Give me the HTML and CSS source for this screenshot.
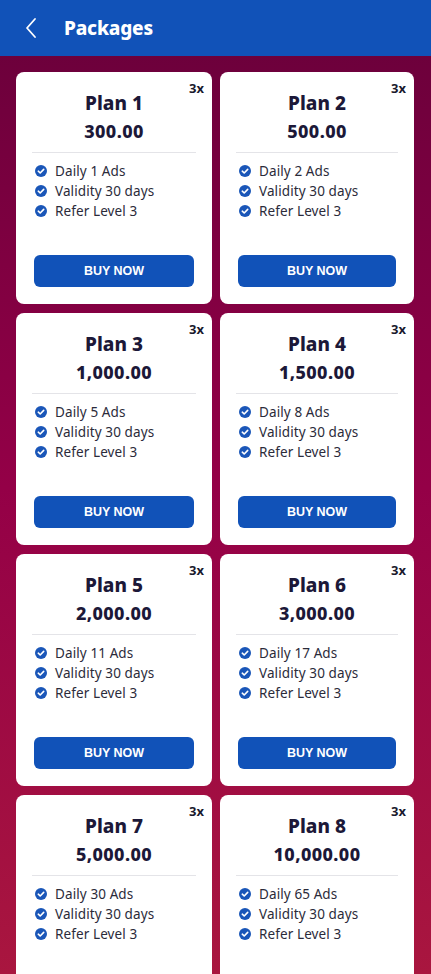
FILE: index.html
```html
<!DOCTYPE html>
<html lang="en">
<head>
    <meta charset="UTF-8">
    <meta name="viewport" content="width=device-width, initial-scale=1.0">
    <title>Packages</title>
    <link rel="stylesheet" href="styles.css">
</head>
<body>
    <header class="topbar">
        <svg class="back" width="14" height="22" viewBox="0 0 14 22"><path d="M11 2 L3 11 L11 20" fill="none" stroke="#fff" stroke-width="1.8" stroke-linecap="round" stroke-linejoin="round"/></svg>
        <h1>Packages</h1>
    </header>

    <main class="plans" id="plans"></main>

    <script>
        const plans = [
            { name: "Plan 1", price: "300.00", ads: 1 },
            { name: "Plan 2", price: "500.00", ads: 2 },
            { name: "Plan 3", price: "1,000.00", ads: 5 },
            { name: "Plan 4", price: "1,500.00", ads: 8 },
            { name: "Plan 5", price: "2,000.00", ads: 11 },
            { name: "Plan 6", price: "3,000.00", ads: 17 },
            { name: "Plan 7", price: "5,000.00", ads: 30 },
            { name: "Plan 8", price: "10,000.00", ads: 65 }
        ];

        const check = '<svg class="tick" width="12" height="12" viewBox="0 0 12 12"><circle cx="6" cy="6" r="6" fill="#1a56b8"/><path d="M3.3 6.2 L5.2 8 L8.7 4.4" fill="none" stroke="#fff" stroke-width="1.6" stroke-linecap="round" stroke-linejoin="round"/></svg>';

        const list = document.getElementById("plans");
        plans.forEach(function(p) {
            const card = document.createElement("div");
            card.className = "card";
            card.innerHTML =
                '<span class="mult">3x</span>' +
                '<h2>' + p.name + '</h2>' +
                '<div class="price">' + p.price + '</div>' +
                '<ul class="features">' +
                    '<li>' + check + 'Daily ' + p.ads + ' Ads</li>' +
                    '<li>' + check + 'Validity 30 days</li>' +
                    '<li>' + check + 'Refer Level 3</li>' +
                '</ul>' +
                '<button type="button">BUY NOW</button>';
            list.appendChild(card);
        });
    </script>
</body>
</html>
```

FILE: styles.css
```css
/* Packages page */
html, body {
    margin: 0;
    padding: 0;
}

body {
    font-family: "Noto Sans", "Open Sans", sans-serif;
    background: linear-gradient(to bottom, #68003a 0%, #940047 50%, #a9163f 100%);
    height: 974px;
    overflow: hidden;
}

.topbar {
    height: 56px;
    background-color: #1152b8;
    display: flex;
    align-items: center;
    padding-left: 24px;
}

.back {
    display: block;
}

.topbar h1 {
    margin: 0 0 0 26px;
    color: #fff;
    font-size: 19px;
    font-weight: 800;
    letter-spacing: -0.2px;
}

.plans {
    display: grid;
    grid-template-columns: 196px 194px;
    column-gap: 8px;
    row-gap: 9px;
    padding: 16px 17px 16px 16px;
}

.card {
    position: relative;
    background-color: #fff;
    border-radius: 8px;
    padding: 19px 16px 17px;
    height: 232px;
    box-sizing: border-box;
    display: flex;
    flex-direction: column;
}

.mult {
    position: absolute;
    top: 7px;
    right: 8px;
    font-size: 13px;
    font-weight: 700;
    color: #1a1a2e;
}

.card h2 {
    margin: 0;
    text-align: center;
    font-size: 19px;
    line-height: 24px;
    font-weight: 800;
    color: #1c1838;
}

.price {
    margin-top: 4px;
    text-align: center;
    font-size: 18px;
    line-height: 24px;
    font-weight: 800;
    letter-spacing: 0.4px;
    color: #1c1838;
    padding-bottom: 9px;
    border-bottom: 1px solid #e4e4e8;
}

.features {
    list-style: none;
    margin: 0;
    padding: 8px 0 0 3px;
}

.features li {
    display: flex;
    align-items: center;
    height: 20px;
    font-size: 13.5px;
    letter-spacing: 0.1px;
    color: #2b2b3a;
}

.tick {
    margin-right: 8px;
    flex-shrink: 0;
}

.card button {
    margin: auto 2px 0;
    height: 32px;
    background-color: #1152b8;
    color: #fff;
    border: none;
    border-radius: 6px;
    font-family: "Liberation Sans", Arial, sans-serif;
    font-size: 12.5px;
    font-weight: 700;
    cursor: pointer;
}
```
